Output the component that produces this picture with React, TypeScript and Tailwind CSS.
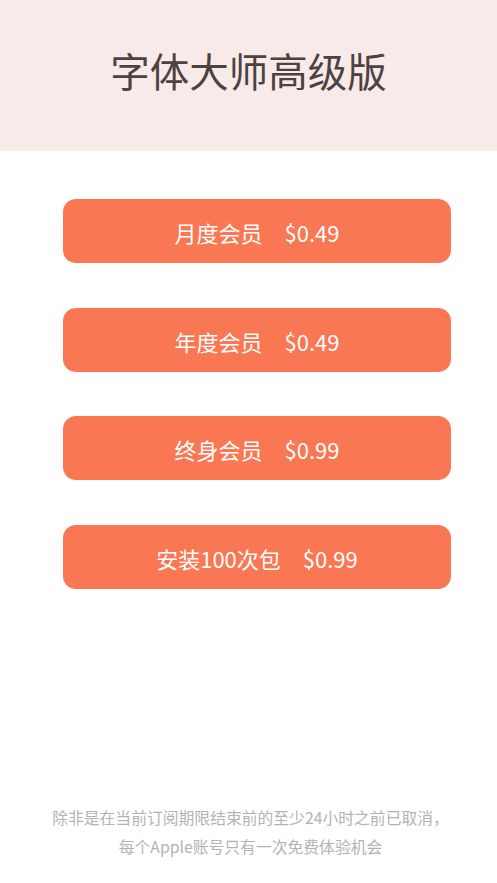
export default function App() {
  const items = [
    { name: "月度会员", price: "$0.49" },
    { name: "年度会员", price: "$0.49" },
    { name: "终身会员", price: "$0.99" },
    { name: "安装100次包", price: "$0.99" },
  ];
  const font = { fontFamily: '"Noto Sans CJK SC", "Noto Sans", sans-serif' };
  return (
    <div className="w-[497px] h-[883px] bg-white flex flex-col" style={font}>
      <div className="h-[151px] bg-[#f9eaea] flex items-center justify-center pb-[12px]">
        <h1 className="text-[39.5px] text-[#4c4242] leading-none tracking-[0px]">字体大师高级版</h1>
      </div>
      <div className="flex flex-col gap-[44.5px] px-[63px] pt-[48px]">
        {items.map((it) => (
          <button
            key={it.name}
            className="h-[64px] w-[388px] rounded-[13px] bg-[#f97752] text-white text-[22px] flex items-center justify-center gap-[22px] pt-[3px]"
          >
            <span>{it.name}</span>
            <span>{it.price}</span>
          </button>
        ))}
      </div>
      <div className="mt-auto pb-[22px] pl-[4px] text-center text-[15.8px] leading-[29px] text-[#b3b3b3]">
        <p>除非是在当前订阅期限结束前的至少24小时之前已取消，</p>
        <p>每个Apple账号只有一次免费体验机会</p>
      </div>
    </div>
  );
}
